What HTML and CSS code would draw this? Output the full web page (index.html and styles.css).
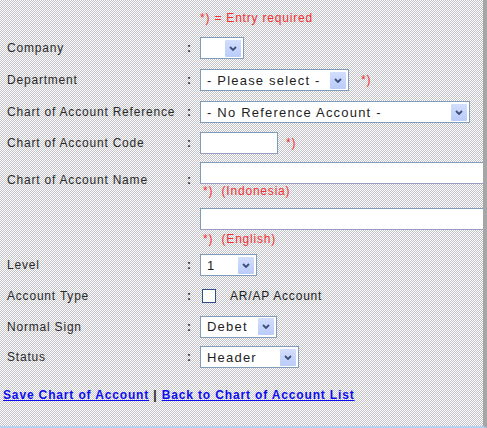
FILE: index.html
```html
<!DOCTYPE html>
<html>
<head>
<meta charset="utf-8">
<link rel="stylesheet" href="styles.css">
</head>
<body>
<div class="page">
  <div class="form">
    <div class="lbl"></div><div class="col"></div>
    <div class="field note-row"><span class="req">*) = Entry required</span></div>

    <div class="lbl">Company</div><div class="col">:</div>
    <div class="field"><span class="sel w-company"><span class="val"></span><span class="btn"><svg width="8" height="5" viewBox="0 0 8 5"><path d="M1 1 L4 4 L7 1" fill="none" stroke="#3b4f7a" stroke-width="1.8"/></svg></span></span></div>

    <div class="lbl">Department</div><div class="col">:</div>
    <div class="field"><span class="sel w-dept"><span class="val">- Please select -</span><span class="btn"><svg width="8" height="5" viewBox="0 0 8 5"><path d="M1 1 L4 4 L7 1" fill="none" stroke="#3b4f7a" stroke-width="1.8"/></svg></span></span><span class="req mark-dept">*)</span></div>

    <div class="lbl">Chart of Account Reference</div><div class="col">:</div>
    <div class="field"><span class="sel w-ref"><span class="val">- No Reference Account -</span><span class="btn"><svg width="8" height="5" viewBox="0 0 8 5"><path d="M1 1 L4 4 L7 1" fill="none" stroke="#3b4f7a" stroke-width="1.8"/></svg></span></span></div>

    <div class="lbl">Chart of Account Code</div><div class="col">:</div>
    <div class="field"><span class="txt w-code"></span><span class="req mark-code">*)</span></div>

    <div class="lbl">Chart of Account Name</div><div class="col">:</div>
    <div class="field stack name1"><span class="txt w-name"></span><span class="req sub">*)&nbsp;&nbsp;(Indonesia)</span></div>

    <div class="lbl"></div><div class="col"></div>
    <div class="field stack name2"><span class="txt w-name"></span><span class="req sub sub2">*)&nbsp;&nbsp;(English)</span></div>

    <div class="lbl">Level</div><div class="col">:</div>
    <div class="field"><span class="sel w-level"><span class="val">1</span><span class="btn"><svg width="8" height="5" viewBox="0 0 8 5"><path d="M1 1 L4 4 L7 1" fill="none" stroke="#3b4f7a" stroke-width="1.8"/></svg></span></span></div>

    <div class="lbl">Account Type</div><div class="col">:</div>
    <div class="field"><span class="chk"></span><span class="chk-text">AR/AP Account</span></div>

    <div class="lbl">Normal Sign</div><div class="col">:</div>
    <div class="field"><span class="sel w-sign"><span class="val">Debet</span><span class="btn"><svg width="8" height="5" viewBox="0 0 8 5"><path d="M1 1 L4 4 L7 1" fill="none" stroke="#3b4f7a" stroke-width="1.8"/></svg></span></span></div>

    <div class="lbl">Status</div><div class="col">:</div>
    <div class="field"><span class="sel w-status"><span class="val">Header</span><span class="btn"><svg width="8" height="5" viewBox="0 0 8 5"><path d="M1 1 L4 4 L7 1" fill="none" stroke="#3b4f7a" stroke-width="1.8"/></svg></span></span></div>
  </div>
  <div class="links"><a href="#">Save Chart of Account</a> <span class="sep">|</span> <a href="#">Back to Chart of Account List</a></div>
</div>
</body>
</html>
```
FILE: styles.css
```css
html, body {
  margin: 0;
  padding: 0;
}
body {
  font-family: "Liberation Sans", Arial, sans-serif;
  font-size: 12px;
  color: #2a2a2a;
}
.page {
  width: 487px;
  height: 428px;
  box-sizing: border-box;
  border-right: 4px solid #a6a6a6;
  border-bottom: 2px solid #b4d2f2;
  overflow: hidden;
  background: repeating-conic-gradient(#c2c2c8 0% 25%, #ffffff 0% 50%) 0 0 / 2px 2px;
}
.form {
  display: grid;
  grid-template-columns: 178px 15px 1fr;
  grid-template-rows: 24px 32px 32px 32px 30px 43px 49px 30px 31px 31px 30px;
  padding: 8px 0 0 7px;
  letter-spacing: 0.8px;
}
.lbl {
  align-self: center;
  white-space: nowrap;
  line-height: 14px;
}
.col {
  align-self: center;
  padding-left: 2px;
  font-weight: bold;
  line-height: 14px;
}
.field {
  display: flex;
  align-items: center;
  white-space: nowrap;
}
.note-row {
  align-items: flex-start;
  padding-top: 3px;
}
.req {
  color: #f23030;
  line-height: 14px;
}
.mark-dept { margin-left: 12px; }
.mark-code { margin-left: 8px; }
.stack {
  flex-direction: column;
  align-items: flex-start;
  justify-content: flex-start;
}
.name1 { padding-top: 4px; }
.name2 { padding-top: 7px; }
.sub { margin-left: 3px; }
.sub2 { margin-top: 2px; }
.sel {
  display: inline-flex;
  align-items: center;
  height: 22px;
  box-sizing: border-box;
  border: 1px solid #7f9db9;
  background: #fff;
}
.val {
  flex: 1;
  padding-left: 6px;
  font-size: 13px;
  letter-spacing: 1.2px;
  color: #1e1e1e;
  overflow: hidden;
  white-space: nowrap;
}
.btn {
  width: 16px;
  height: 17px;
  margin-right: 2px;
  flex: none;
  display: flex;
  align-items: center;
  justify-content: center;
  background: linear-gradient(#d3defd, #b9cbf9);
  border-radius: 1px;
}
.txt {
  display: block;
  height: 22px;
  box-sizing: border-box;
  border: 1px solid #7f9db9;
  border-bottom-color: #9a9ec4;
  background: #fff;
}
.w-company { width: 44px; }
.w-dept { width: 149px; }
.w-ref { width: 270px; }
.w-code { width: 78px; }
.w-name { width: 300px; }
.w-level { width: 57px; }
.w-sign { width: 77px; }
.w-status { width: 99px; }
.chk {
  width: 14px;
  height: 14px;
  box-sizing: border-box;
  margin-left: 2px;
  border: 1px solid #2a4f86;
  background: #fff;
}
.chk-text {
  margin-left: 14px;
  color: #1e1e1e;
}
.links {
  margin-top: 16px;
  padding-left: 3px;
  line-height: 14px;
  font-weight: bold;
  letter-spacing: 0.85px;
  white-space: nowrap;
}
.links a {
  color: #0d0df0;
  text-decoration: underline;
}
.sep {
  color: #222;
}
```
